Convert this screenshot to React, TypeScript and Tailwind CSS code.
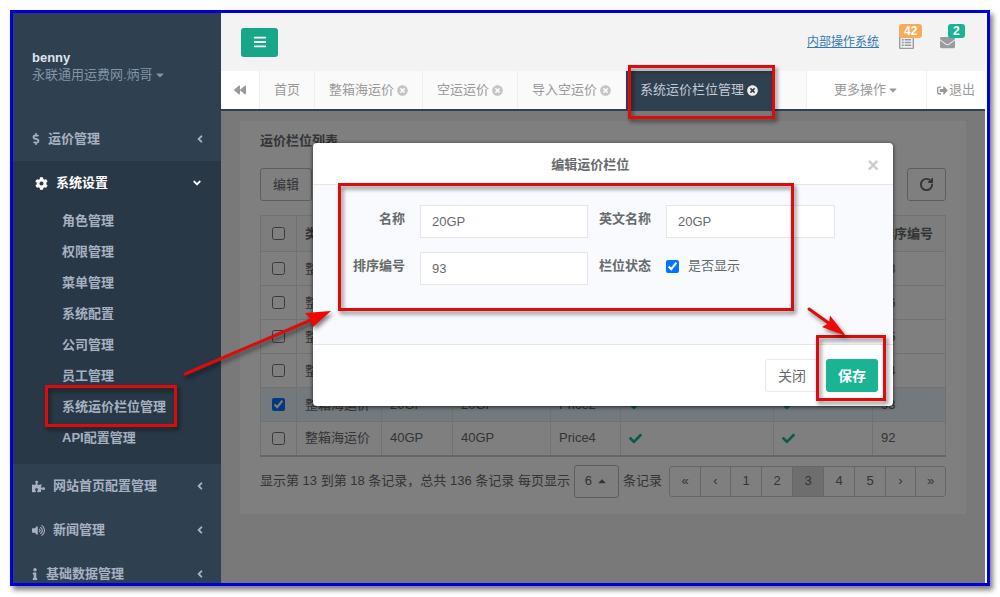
import type { ReactNode } from "react";
import { RotateCw } from "lucide-react";
import {
  FaAngleDown,
  FaAngleLeft,
  FaBackward,
  FaBars,
  FaCaretDown,
  FaCaretUp,
  FaCheck,
  FaCog,
  FaDollarSign,
  FaEnvelope,
  FaInfo,
  FaPuzzlePiece,
  FaRegListAlt,
  FaSignOutAlt,
  FaTimesCircle,
  FaVolumeUp,
} from "react-icons/fa";

const SETTINGS = [
  "角色管理",
  "权限管理",
  "菜单管理",
  "系统配置",
  "公司管理",
  "员工管理",
  "系统运价栏位管理",
  "API配置管理",
];

const TABS = ["首页", "整箱海运价", "空运运价", "导入空运价", "系统运价栏位管理"];

const HEADERS = ["类型", "", "", "", "", "", "排序编号"];

const ROWS = [
  { name: "", price: "", sort: 98 },
  { name: "", price: "", sort: 96 },
  { name: "", price: "", sort: 95 },
  { name: "", price: "", sort: 94 },
  { name: "20GP", price: "Price2", sort: 93 },
  { name: "40GP", price: "Price4", sort: 92 },
];

const PAGES = ["«", "‹", "1", "2", "3", "4", "5", "›", "»"];

// Red frame laid over its relative parent
function Highlight({ className }: { className: string }) {
  return (
    <span
      aria-hidden
      className={`pointer-events-none absolute z-30 border-[3px] border-[#dc0c0c] drop-shadow-[2px_3px_2px_rgba(0,0,0,0.5)] ${className}`}
    />
  );
}

function MenuItem({ icon, label }: { icon: ReactNode; label: string }) {
  return (
    <a href="#" className="flex h-11 items-center gap-2 pr-[18px] pl-[19px] font-bold">
      {icon}
      <span className="flex-1">{label}</span>
      <FaAngleLeft className="h-3 w-1.5" />
    </a>
  );
}

function Sidebar() {
  return (
    <nav className="relative z-30 w-52 shrink-0 bg-[#2f4050] text-[#a7b1c2]">
      <div className="h-26 pt-9 pl-[19px] leading-[17px]">
        <p className="font-bold text-[#dfe4ed]">benny</p>
        <button className="flex items-center gap-px text-[#8095a8]">
          永联通用运费网.炳哥
          <FaCaretDown size={12} />
        </button>
      </div>

      <MenuItem icon={<FaDollarSign className="h-3 w-2" />} label="运价管理" />

      <div className="bg-[#293846] pb-[11px]">
        <a href="#" className="flex h-11 items-center gap-2 pr-[18px] pl-[22px] font-bold text-white">
          <FaCog size={13} />
          <span className="flex-1">系统设置</span>
          <FaAngleDown size={12} />
        </a>
        {SETTINGS.map((label) => (
          <div key={label} className="relative">
            <a href="#" className="flex h-[31px] items-center pl-[49px] font-bold">
              {label}
            </a>
            {label === "系统运价栏位管理" && (
              <>
                <Highlight className="-top-1.5 left-8 h-[42px] w-[132px]" />
                <svg
                  className="pointer-events-none absolute -top-[86px] left-[170px] z-30 drop-shadow-[2px_3px_2px_rgba(0,0,0,0.5)]"
                  width="152"
                  height="74"
                  viewBox="0 0 152 74"
                >
                  <path d="M2 69 L128 15" stroke="#dc0c0c" strokeWidth="3" strokeLinecap="round" />
                  <path d="M148 6 L122 8 L128 14.500 L130 22 Z" fill="#f00808" />
                </svg>
              </>
            )}
          </div>
        ))}
      </div>

      <MenuItem icon={<FaPuzzlePiece size={13} />} label="网站首页配置管理" />
      <MenuItem icon={<FaVolumeUp size={13} />} label="新闻管理" />
      <MenuItem icon={<FaInfo className="h-3 w-1.5" />} label="基础数据管理" />
    </nav>
  );
}

function TopBar() {
  const badge = "absolute -top-[11px] rounded-[3px] px-[5px] text-xs leading-[14px] font-bold text-white";
  return (
    <header className="flex h-[58px] items-center bg-[#f3f3f4] pr-[30px] pl-5">
      <button
        aria-label="菜单"
        className="flex h-[29px] w-[37px] items-center justify-center rounded-[3px] bg-[#18a689] text-white"
      >
        <FaBars size={14} />
      </button>
      <a href="#" className="mr-5 ml-auto text-xs text-[#337ab7] underline">
        内部操作系统
      </a>
      <a href="#" className="relative text-[#999c9e]">
        <FaRegListAlt size={15} />
        <span className={`left-0 bg-[#f8ac59] ${badge}`}>42</span>
      </a>
      <a href="#" className="relative ml-[26px] text-[#999c9e]">
        <FaEnvelope size={15} />
        <span className={`left-2 bg-[#1ab394] ${badge}`}>2</span>
      </a>
    </header>
  );
}

function TabBar() {
  return (
    <div className="flex h-10 border-b-2 border-[#2f4050] bg-[#fafafa] text-[#999]">
      <button aria-label="左移" className="flex w-[39px] items-center justify-center border-r border-[#eee] bg-white">
        <FaBackward size={12} />
      </button>
      {TABS.map((tab, i) => {
        const active = i === TABS.length - 1;
        return (
          <a
            key={tab}
            href="#"
            className={`relative flex items-center gap-[3px] px-[14px] ${
              active ? "bg-[#2f4050] text-[#c3cbd6]" : "border-r border-[#eee]"
            }`}
          >
            {tab}
            {i > 0 && <FaTimesCircle size={11} className={active ? "text-[#eee]" : "text-[#c4c4c4]"} />}
            {active && <Highlight className="-top-1.5 left-0.5 h-[54px] w-[147px]" />}
          </a>
        );
      })}
      <button className="ml-auto flex w-[121px] items-center justify-center gap-px border-x border-[#eee] bg-white">
        更多操作
        <FaCaretDown size={12} />
      </button>
      <a href="#" className="flex w-[58px] items-center justify-center gap-px bg-white">
        <FaSignOutAlt size={11} />
        退出
      </a>
    </div>
  );
}

function FieldTable() {
  const cell = "border border-[#e2e2e2] px-2";
  return (
    <table className="mt-[14px] w-full table-fixed border-collapse border-b-2 border-[#ccc] text-left">
      <colgroup>
        <col className="w-9" />
        <col className="w-[85px]" />
        <col className="w-[71px]" />
        <col className="w-[98px]" />
        <col className="w-[70px]" />
        <col className="w-[153px]" />
        <col className="w-[99px]" />
        <col />
      </colgroup>
      <thead>
        <tr className="h-9 bg-[#fafafa]">
          <th className={cell}>
            <input type="checkbox" aria-label="全选" className="mx-auto block size-[13px]" />
          </th>
          {HEADERS.map((header, i) => (
            <th key={i} className={cell}>
              {header}
            </th>
          ))}
        </tr>
      </thead>
      <tbody>
        {ROWS.map((row) => {
          const checked = row.sort === 93;
          return (
            <tr key={row.sort} className={`h-[34px] ${checked ? "bg-[#e8f2fa]" : ""}`}>
              <td className={cell}>
                <input
                  type="checkbox"
                  aria-label={`选择 ${row.sort}`}
                  defaultChecked={checked}
                  className="mx-auto block size-[13px]"
                />
              </td>
              <td className={cell}>整箱海运价</td>
              <td className={cell}>{row.name}</td>
              <td className={cell}>{row.name}</td>
              <td className={cell}>{row.price}</td>
              <td className={cell}>
                <FaCheck size={13} className="text-[#1ab394]" />
              </td>
              <td className={cell}>
                <FaCheck size={13} className="text-[#1ab394]" />
              </td>
              <td className={cell}>{row.sort}</td>
            </tr>
          );
        })}
      </tbody>
    </table>
  );
}

function Pagination() {
  return (
    <div className="mt-2 flex items-center">
      <span className="whitespace-nowrap">显示第 13 到第 18 条记录，总共 136 条记录 每页显示</span>
      <button className="mx-1 flex h-[33px] w-[45px] shrink-0 items-center justify-center gap-1 rounded-[3px] border border-[#bbb]">
        6
        <FaCaretUp size={12} />
      </button>
      <span className="whitespace-nowrap">条记录</span>
      <div className="ml-auto flex h-[31px] rounded-[3px] border border-[#ccc]">
        {PAGES.map((page) => (
          <button
            key={page}
            className={`border-l border-[#ccc] first:border-l-0 ${/\d/.test(page) ? "w-[31px]" : "w-[30px]"} ${
              page === "3" ? "bg-[#dcdcdc]" : ""
            }`}
          >
            {page}
          </button>
        ))}
      </div>
    </div>
  );
}

function EditModal() {
  const label = "self-start pt-[5px] pr-[15px] text-right font-bold text-[#676a6c]";
  const input = "h-[33px] w-full border border-[#e5e6e7] bg-white px-[11px] text-[#676a6c]";
  return (
    <div
      role="dialog"
      aria-label="编辑运价栏位"
      className="absolute top-8 left-1/2 z-20 w-[580px] -translate-x-1/2 rounded bg-white text-[#676a6c] shadow-[0_1px_4px_rgba(0,0,0,0.7)]"
    >
      <div className="flex h-[42px] items-center border-b border-[#e5e5e5] pt-0.5 pr-[14px]">
        <h4 className="flex-1 text-center font-bold">编辑运价栏位</h4>
        <button aria-label="关闭窗口" className="text-xl font-bold text-[#ccc]">
          ×
        </button>
      </div>
      <form>
        <div className="relative grid h-[159px] grid-cols-[107px_168px_78px_169px] content-start gap-y-[14px] bg-[#f8fafd] pt-5">
          <label htmlFor="name" className={label}>
            名称
          </label>
          <input id="name" defaultValue="20GP" className={input} />
          <label htmlFor="nameEn" className={label}>
            英文名称
          </label>
          <input id="nameEn" defaultValue="20GP" className={input} />
          <label htmlFor="sort" className={label}>
            排序编号
          </label>
          <input id="sort" defaultValue="93" className={input} />
          <span className={label}>栏位状态</span>
          <label className="flex items-center gap-[9px] self-start pt-[5px]">
            <input type="checkbox" defaultChecked className="size-[13px]" />
            是否显示
          </label>
          <Highlight className="-top-0.5 left-[25px] h-32 w-[456px]" />
        </div>
        <div className="flex h-[62px] items-center justify-end gap-[7px] border-t border-[#e5e5e5] pr-[15px]">
          <button type="button" className="h-[33px] rounded-[3px] border border-[#e7eaec] px-3 text-sm">
            关闭
          </button>
          <div className="relative">
            <button type="submit" className="h-[33px] rounded-[3px] bg-[#1ab394] px-3 text-sm font-bold text-white">
              保存
            </button>
            <Highlight className="-top-6 -left-2.5 h-[66px] w-[70px]" />
            <svg
              className="pointer-events-none absolute -top-[54px] -left-5 z-30 drop-shadow-[2px_3px_2px_rgba(0,0,0,0.5)]"
              width="44"
              height="36"
              viewBox="0 0 44 36"
            >
              <path d="M3 4 L24 19" stroke="#dc0c0c" strokeWidth="3" strokeLinecap="round" />
              <path d="M40 31 L24 10.500 L23 18 L16 22 Z" fill="#f00808" />
            </svg>
          </div>
        </div>
      </form>
    </div>
  );
}

export default function App() {
  return (
    <div className="h-screen min-h-[597px] bg-white p-2.5 pb-[11px] font-['Liberation_Sans','Noto_Sans_CJK_SC',sans-serif] text-[13px] leading-[18px] text-[#676a6c]">
      <div className="flex h-full overflow-hidden border-[3px] border-[#0000dc] bg-white shadow-[3px_4px_5px_rgba(0,0,0,0.5)]">
        <Sidebar />
        <div className="mr-0.5 flex min-w-0 flex-1 flex-col">
          <TopBar />
          <TabBar />
          <main className="relative flex-1 bg-[#f3f3f4] px-[19px] pt-2.5">
            <section className="bg-white px-5 pt-[11px] pb-4">
              <h5 className="font-bold">运价栏位列表</h5>
              <div className="mt-[18px] flex justify-between">
                <button className="h-[33px] rounded-[3px] border border-[#bbb] px-3">编辑</button>
                <button
                  aria-label="刷新"
                  className="flex h-[33px] w-[39px] items-center justify-center rounded-[3px] border border-[#bbb]"
                >
                  <RotateCw size={15} strokeWidth={3} />
                </button>
              </div>
              <FieldTable />
              <Pagination />
            </section>
            <div className="absolute inset-0 z-10 bg-black/50" />
            <EditModal />
          </main>
        </div>
      </div>
    </div>
  );
}
